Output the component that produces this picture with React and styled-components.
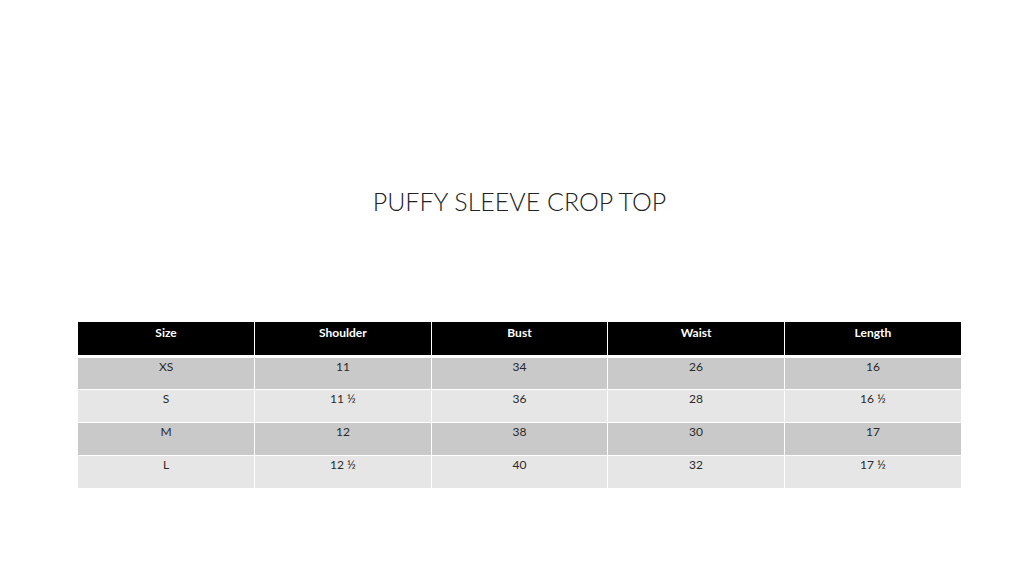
import React from 'react';
import styled, { createGlobalStyle } from 'styled-components';

const GlobalStyle = createGlobalStyle`
    html, body {
        margin: 0;
        padding: 0;
        background: #fff;
    }
`;

const Page = styled.div`
    width: 1024px;
    height: 576px;
    box-sizing: border-box;
    padding-left: 15px;
    display: flex;
    flex-direction: column;
    align-items: center;
    font-family: Lato, "Open Sans", sans-serif;
`;

const Title = styled.h1`
    margin: 184px 0 0 0;
    font-family: Lato, sans-serif;
    font-weight: 300;
    font-size: 25px;
    line-height: 34px;
    color: #222;
`;

const Table = styled.table`
    margin-top: 104px;
    width: 883px;
    border-collapse: collapse;
    table-layout: fixed;
`;

const HeadCell = styled.th`
    background: #000;
    color: #fff;
    font-weight: 700;
    font-size: 12px;
    line-height: 14px;
    height: 34px;
    padding: 4px 0 0 0;
    vertical-align: top;
    text-align: center;
    border-left: 1px solid #fff;
    border-bottom: 3px solid #fff;
    box-sizing: border-box;
    &:first-child {
        border-left: none;
    }
`;

const Cell = styled.td`
    background: ${p => (p.$dark ? '#c9c9c9' : '#e6e6e6')};
    color: #2a2a2a;
    font-size: 12px;
    line-height: 14px;
    height: 33px;
    padding: 2px 0 0 0;
    vertical-align: top;
    text-align: center;
    border-left: 1px solid #fff;
    border-bottom: 1px solid #fff;
    box-sizing: border-box;
    &:first-child {
        border-left: none;
    }
`;

const headers = ['Size', 'Shoulder', 'Bust', 'Waist', 'Length'];

const rows = [
    ['XS', '11', '34', '26', '16'],
    ['S', '11 ½', '36', '28', '16 ½'],
    ['M', '12', '38', '30', '17'],
    ['L', '12 ½', '40', '32', '17 ½'],
];

export default function App() {
    return (
        <Page>
            <GlobalStyle/>
            <Title>PUFFY SLEEVE CROP TOP</Title>
            <Table>
                <thead>
                    <tr>
                        {headers.map(h => <HeadCell key={h}>{h}</HeadCell>)}
                    </tr>
                </thead>
                <tbody>
                    {rows.map((r, i) => (
                        <tr key={r[0]}>
                            {r.map((v, j) => <Cell key={j} $dark={i % 2 === 0}>{v}</Cell>)}
                        </tr>
                    ))}
                </tbody>
            </Table>
        </Page>
    );
}
